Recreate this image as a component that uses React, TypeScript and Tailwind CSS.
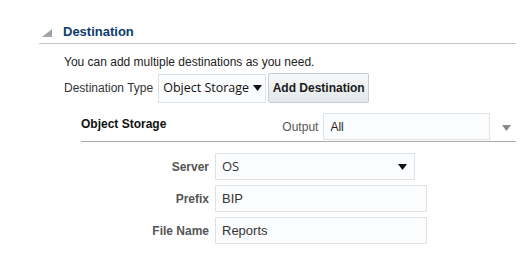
const caret = (color: string) => (
    <svg width="9" height="6" viewBox="0 0 9 6" className="shrink-0">
        <polygon points="0,0 9,0 4.5,6" fill={color} />
    </svg>
);

export default function App() {
    const labelCls = 'w-[151px] pr-[6px] text-right text-[12px] font-bold text-[#555]';
    const inputCls =
        'h-[27px] border border-[#dce1e4] bg-[#fbfcfd] rounded-[1px] flex items-center px-[6px] text-[13px] text-[#333]';

    return (
        <div className="w-[526px] h-[265px] bg-white overflow-hidden font-['Liberation_Sans',Arial,sans-serif] text-[#333]">
            <div className="h-[20px]" />

            {/* section header */}
            <div className="ml-[39px] w-[477px] h-[24px] flex items-center border-b border-[#c6c6c6]">
                <svg width="10" height="8" viewBox="0 0 10 8" className="ml-[3px] mt-[2px]">
                    <polygon points="10,0 10,8 0,8" fill="#a3a3a3" />
                </svg>
                <span className="ml-[11px] text-[13px] font-bold text-[#0c3c6e]">Destination</span>
            </div>

            <div className="ml-[64px] mt-[8px] h-[20px] leading-[20px] text-[12px] text-[#222]">
                You can add multiple destinations as you need.
            </div>

            <div className="ml-[64px] mt-[1px] h-[30px] flex items-center">
                <span className="text-[12px] text-[#333]">Destination Type</span>
                <div className="ml-[5px] w-[108px] h-[29px] border border-[#dce1e4] bg-[#fbfcfd] flex items-center pl-[4px] gap-[4px] font-['Open_Sans',sans-serif] text-[12.5px] text-[#111]">
                    <span>Object Storage</span>
                    {caret('#111')}
                </div>
                <button className="ml-[2px] w-[101px] h-[30px] border border-[#c5ced6] rounded-[2px] bg-gradient-to-b from-[#f7f8f9] to-[#e3e7eb] text-[12px] font-bold text-[#1a1a1a]">
                    Add Destination
                </button>
            </div>

            {/* destination block */}
            <div className="ml-[81px] w-[435px] mt-[9px] h-[30px] flex items-center border-b border-[#a9a9a9]">
                <span className="text-[12px] font-bold text-[#111] -mt-[5px]">Object Storage</span>
                <span className="ml-[116px] text-[12px] text-[#555]">Output</span>
                <div className="ml-[5px] w-[167px] h-[27px] border border-[#dfe4e7] bg-[#fbfcfd] flex items-center px-[6px] text-[12px] text-[#222]">
                    All
                </div>
                <div className="ml-[12px] mt-[2px]">{caret('#8a8a8a')}</div>
            </div>

            <div className="mt-[11px] flex flex-col gap-[5px]">
                <div className="flex items-center ml-[64px]">
                    <span className={labelCls}>Server</span>
                    <div className={`${inputCls} w-[200px] justify-between font-['Open_Sans',sans-serif] text-[12.5px] text-[#111]`}>
                        <span>OS</span>
                        <span className="mr-[1px]">{caret('#111')}</span>
                    </div>
                </div>
                <div className="flex items-center ml-[64px]">
                    <span className={labelCls}>Prefix</span>
                    <div className={`${inputCls} w-[212px]`}>BIP</div>
                </div>
                <div className="flex items-center ml-[64px]">
                    <span className={labelCls}>File Name</span>
                    <div className={`${inputCls} w-[212px]`}>Reports</div>
                </div>
            </div>
        </div>
    );
}
